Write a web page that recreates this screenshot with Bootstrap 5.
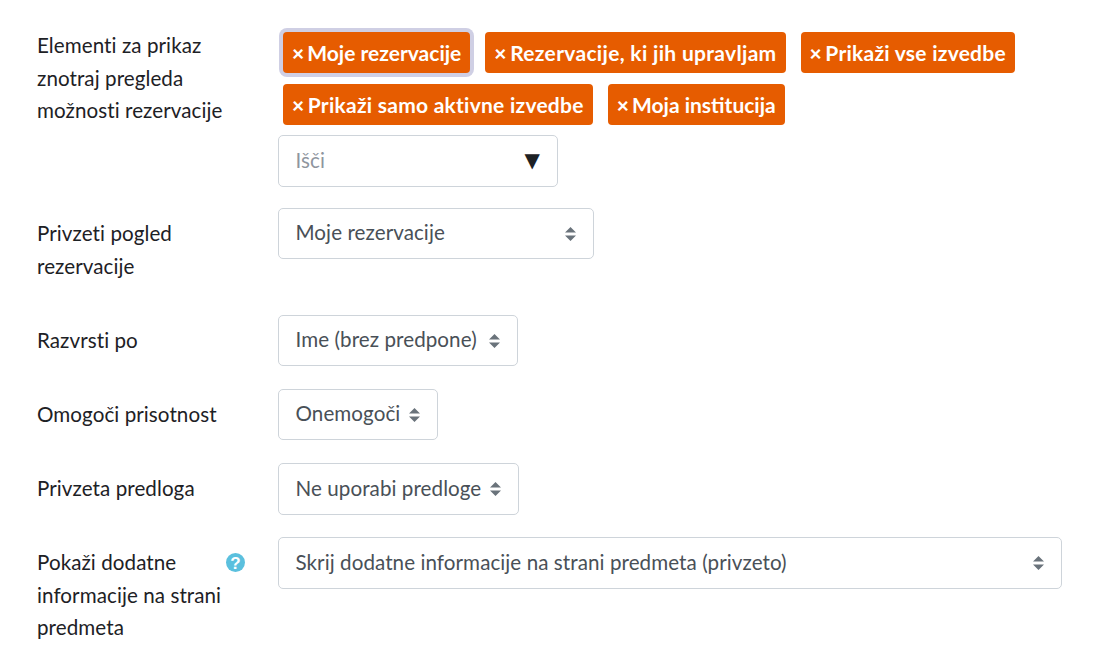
<!DOCTYPE html>
<html lang="sl"><head><meta charset="utf-8">
<link href="https://cdn.jsdelivr.net/npm/bootstrap@5.3.0/dist/css/bootstrap.min.css" rel="stylesheet">
<style>
body{font-family:"Lato","Noto Sans",sans-serif;font-size:20.6px;letter-spacing:.07px;line-height:32.5px;color:#1d2125;background:#fff}
.pg{padding:30px 57px 0 37px}
.lbl-col{width:241px;flex:none}
.lbl-top{margin-top:-1px}
.lbl-txt{width:189px;flex:none}
.rw{margin-bottom:23px}
.rw2{margin-bottom:24px}
.rw5{margin-bottom:22px}
.lbl-pad{padding-top:9px;padding-bottom:9px}
.first{margin-bottom:21px}
.ctl{flex:1;min-width:0}
.tags{padding-top:2px}
.tagx{background:#e65c00;color:#fff;font-weight:700;font-size:21px;letter-spacing:.25px;line-height:25px;padding:8px 9px;border-radius:4px;margin:0 15px 11px 5px;white-space:nowrap}
.tagx + .tagx{margin-left:0}
.tagx.foc{box-shadow:0 0 0 4px #cfcfe4}
.tagx.tight{letter-spacing:0}
.tagx.loose{letter-spacing:.32px}
.tagx b{margin-right:-2px}
.tagrow{display:flex;flex-wrap:wrap}
.tagrow + .tagrow .tagx{margin-bottom:10px}
.sel{height:51px;color:#495057;border:1px solid #ced4da;border-radius:5px;padding:0 17px 0 16.5px;background:#fff}
.sel > span{position:relative;top:-1px}
.srch{width:280px;height:52px}
.srch > span:first-child{color:#8f959e}
.w1{width:316px}.w2{width:240px}.w3{width:160px}.w4{width:241px;height:52px}.w5{width:784px;height:52px}
.updn{flex:none;color:#6a737b}
.tri{font-family:"DejaVu Sans",sans-serif;font-size:20px;color:#1d2125}
.hlp{flex:none;margin-top:7px}
.hlp text{font-family:"Liberation Sans",sans-serif;font-weight:700;font-size:17px;fill:#fff}
</style></head><body>
<main class="pg">
<div class="d-flex first">
 <div class="lbl-col lbl-top"><div class="lbl-txt">Elementi za prikaz znotraj pregleda možnosti rezervacije</div></div>
 <div class="ctl tags">
  <div class="tagrow">
   <span class="tagx foc tight"><b>×</b> Moje rezervacije</span><span class="tagx loose"><b>×</b> Rezervacije, ki jih upravljam</span><span class="tagx"><b>×</b> Prikaži vse izvedbe</span>
  </div>
  <div class="tagrow">
   <span class="tagx"><b>×</b> Prikaži samo aktivne izvedbe</span><span class="tagx tight"><b>×</b> Moja institucija</span>
  </div>
  <div class="sel srch d-flex align-items-center justify-content-between"><span>Išči</span><span class="tri">▼</span></div>
 </div>
</div>
<div class="d-flex rw2">
 <div class="lbl-col lbl-pad"><div class="lbl-txt">Privzeti pogled rezervacije</div></div>
 <div class="ctl"><div class="sel w1 d-flex align-items-center justify-content-between"><span>Moje rezervacije</span>
  <svg class="updn" width="11" height="14" viewBox="0 0 11 14"><path fill="currentColor" d="M5.500 0 11 5.500H0zM0 8.500h11L5.500 14z"/></svg></div></div>
</div>
<div class="d-flex rw">
 <div class="lbl-col lbl-pad"><div class="lbl-txt">Razvrsti po</div></div>
 <div class="ctl"><div class="sel w2 d-flex align-items-center justify-content-between"><span>Ime (brez predpone)</span>
  <svg class="updn" width="11" height="14" viewBox="0 0 11 14"><path fill="currentColor" d="M5.500 0 11 5.500H0zM0 8.500h11L5.500 14z"/></svg></div></div>
</div>
<div class="d-flex rw">
 <div class="lbl-col lbl-pad"><div class="lbl-txt">Omogoči prisotnost</div></div>
 <div class="ctl"><div class="sel w3 d-flex align-items-center justify-content-between"><span>Onemogoči</span>
  <svg class="updn" width="11" height="14" viewBox="0 0 11 14"><path fill="currentColor" d="M5.500 0 11 5.500H0zM0 8.500h11L5.500 14z"/></svg></div></div>
</div>
<div class="d-flex rw5">
 <div class="lbl-col lbl-pad"><div class="lbl-txt">Privzeta predloga</div></div>
 <div class="ctl"><div class="sel w4 d-flex align-items-center justify-content-between"><span>Ne uporabi predloge</span>
  <svg class="updn" width="11" height="14" viewBox="0 0 11 14"><path fill="currentColor" d="M5.500 0 11 5.500H0zM0 8.500h11L5.500 14z"/></svg></div></div>
</div>
<div class="d-flex">
 <div class="lbl-col lbl-pad d-flex">
  <div class="lbl-txt">Pokaži dodatne informacije na strani predmeta</div>
  <svg class="hlp" width="19" height="19" viewBox="0 0 19 19"><circle cx="9.500" cy="9.500" r="9.500" fill="#5bc0de"/><text x="9.500" y="15.500" text-anchor="middle">?</text></svg>
 </div>
 <div class="ctl"><div class="sel w5 d-flex align-items-center justify-content-between"><span>Skrij dodatne informacije na strani predmeta (privzeto)</span>
  <svg class="updn" width="11" height="14" viewBox="0 0 11 14"><path fill="currentColor" d="M5.500 0 11 5.500H0zM0 8.500h11L5.500 14z"/></svg></div></div>
</div>
</main>
<script src="https://cdn.jsdelivr.net/npm/bootstrap@5.3.0/dist/js/bootstrap.bundle.min.js"></script>
</body></html>
